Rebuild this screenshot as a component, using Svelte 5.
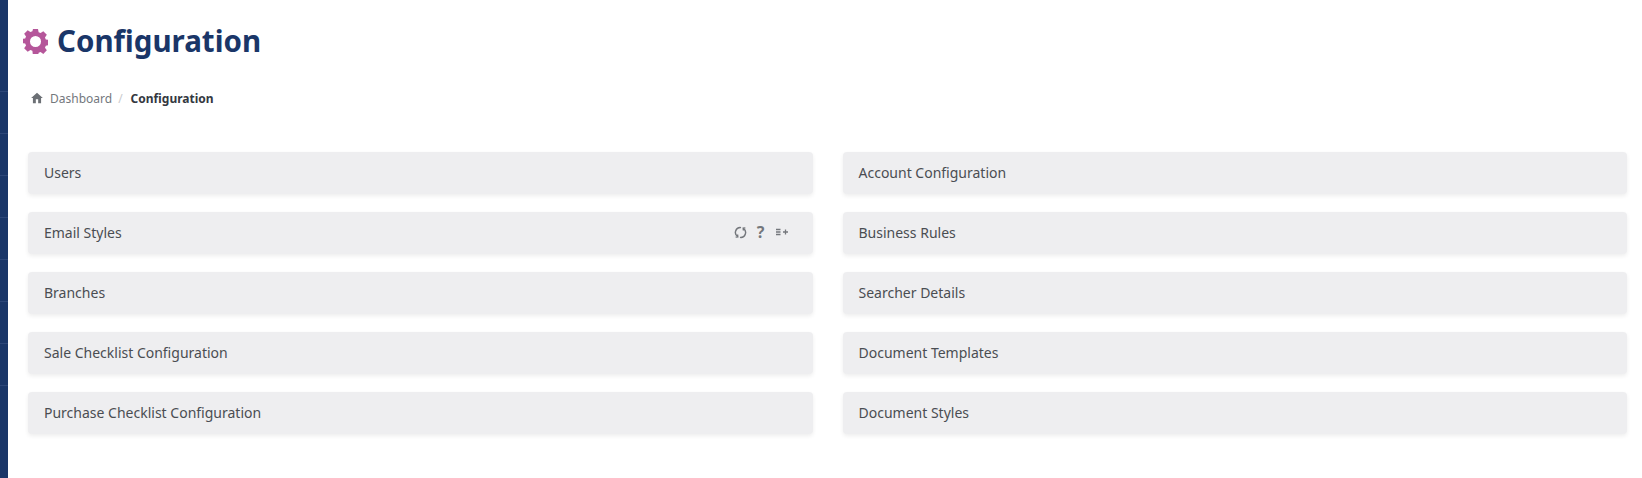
<script lang="ts">
  const left = ["Users", "Email Styles", "Branches", "Sale Checklist Configuration", "Purchase Checklist Configuration"];
  const right = ["Account Configuration", "Business Rules", "Searcher Details", "Document Templates", "Document Styles"];
</script>

<div class="layout">
  <aside class="rail">
    {#each Array(8) as _}
      <div class="rail-item"></div>
    {/each}
  </aside>

  <main class="content">
    <h1>
      <svg class="gear" viewBox="0 0 24 24" aria-hidden="true">
        <path
          fill-rule="evenodd"
          d="M9.600 0h4.800l.6 3.100 1.900.8 2.600-1.800 3.400 3.400-1.800 2.600.8 1.900 3.100.6v4.800l-3.100.6-.8 1.900 1.800 2.600-3.400 3.400-2.600-1.800-1.900.8-.6 3.100H9.600L9 20.900l-1.900-.8-2.600 1.800-3.400-3.400 1.800-2.600-.8-1.900-3.100-.6V9.600L2.100 9l.8-1.900-1.800-2.600 3.400-3.400 2.600 1.800L9 2.100zM12 6.700a5.300 5.300 0 1 0 0 10.600 5.300 5.300 0 0 0 0-10.600z"
        />
      </svg>
      Configuration
    </h1>

    <nav class="crumbs">
      <svg class="home" viewBox="0 0 24 24" aria-hidden="true">
        <path d="M10 21v-7h4v7h5v-9h3L12 3 2 12h3v9z" />
      </svg>
      <span class="crumb">Dashboard</span>
      <span class="sep">/</span>
      <strong>Configuration</strong>
    </nav>

    <div class="columns">
      <div class="column">
        {#each left as title}
          <div class="panel">
            <span>{title}</span>
            {#if title === "Email Styles"}
              <div class="tools">
                <svg class="tool" viewBox="0 0 12 12" aria-hidden="true">
                  <path d="M6.500 1.500A4.500 4.500 0 0 0 3.500 9.800" />
                  <path d="M5.500 10.500A4.500 4.500 0 0 0 8.500 2.200" />
                  <path d="M3.300 7.800 3.500 10 1.500 10.300M8.700 4.200 8.500 2 10.500 1.700" />
                </svg>
                <span class="help">?</span>
                <svg class="tool wide" viewBox="0 0 14 12" aria-hidden="true">
                  <path d="M1 3.500h4.500M1 6h4.500M1 8.500h4.500M8 6h5M10.500 3.500v5" />
                </svg>
              </div>
            {/if}
          </div>
        {/each}
      </div>
      <div class="column">
        {#each right as title}
          <div class="panel"><span>{title}</span></div>
        {/each}
      </div>
    </div>
  </main>
</div>

<style>
  :global(body) {
    background: #fff;
    font-family: "Noto Sans", "Open Sans", sans-serif;
  }

  .layout {
    display: flex;
    height: 478px;
    overflow: hidden;
  }

  .rail {
    width: 8px;
    flex: none;
    background: #1a3668;
    display: flex;
    flex-direction: column;
    padding-top: 50px;
  }

  .rail-item {
    height: 41px;
    flex: none;
    border-bottom: 1px solid #2d4778;
  }

  .content {
    flex: 1;
    padding: 0 15px 0 20px;
    min-width: 0;
  }

  h1 {
    margin: 0 0 0 -5px;
    padding-top: 19px;
    height: 44px;
    display: flex;
    align-items: center;
    gap: 9px;
    font-size: 29.500px;
    font-weight: 700;
    line-height: 44px;
    color: #1a3668;
  }

  .gear {
    width: 25px;
    height: 25px;
    fill: #b5569a;
  }

  .crumbs {
    display: flex;
    align-items: center;
    height: 20px;
    margin-top: 25px;
    padding-left: 2px;
    font-size: 12px;
    color: #73777d;
  }

  .home {
    width: 14px;
    height: 14px;
    fill: #6c7075;
    margin-right: 6px;
  }

  .sep {
    margin: 0 8px 0 6px;
    color: #c9cbce;
  }

  strong {
    font-weight: 700;
    font-size: 12px;
    color: #34383f;
  }

  .columns {
    display: grid;
    grid-template-columns: 1fr 1fr;
    gap: 30px;
    margin-top: 44px;
  }

  .column {
    display: flex;
    flex-direction: column;
    gap: 18px;
  }

  .panel {
    height: 42px;
    box-sizing: border-box;
    padding: 0 16px 2px;
    display: flex;
    align-items: center;
    justify-content: space-between;
    background: #eeeef0;
    border-radius: 4px;
    box-shadow: 0 2px 4px rgba(0, 0, 0, 0.07);
    font-size: 14px;
    color: #4a4d52;
  }

  .tools {
    display: flex;
    align-items: center;
    gap: 10px;
    margin-right: 8px;
    color: #74777c;
  }

  .tool {
    width: 13px;
    height: 13px;
    fill: none;
    stroke: currentColor;
    stroke-width: 1.300;
  }

  .tool.wide {
    width: 14px;
    height: 12px;
  }

  .help {
    font-size: 16px;
    font-weight: 700;
    line-height: 1;
  }
</style>
